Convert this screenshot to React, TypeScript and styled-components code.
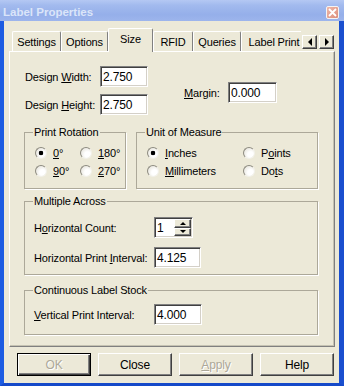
import React from 'react';
import styled, { createGlobalStyle } from 'styled-components';

const Global = createGlobalStyle`
  html, body { margin: 0; padding: 0; background: #ece9d8; }
  body { font-family: "Liberation Sans", Arial, sans-serif; font-size: 11px; color: #000; letter-spacing: -0.15px; }
  * { box-sizing: border-box; }
`;

const Window = styled.div`
  width: 344px;
  height: 386px;
  display: flex;
  flex-direction: column;
  background: #ece9d8;
  overflow: hidden;
`;

const TitleBar = styled.div`
  height: 21px;
  flex: none;
  display: flex;
  align-items: center;
  justify-content: space-between;
  padding: 3px 5px 0 3px;
  background: linear-gradient(to bottom, #b4c8f3 0%, #a2baee 25%, #95afea 70%, #9db5ec 100%);
`;

const Title = styled.span`
  font-family: "Liberation Sans", Arial, sans-serif;
  font-weight: bold;
  font-size: 11.5px;
  letter-spacing: 0;
  color: #dbe5f9;
`;

const CloseBtn = styled.div`
  width: 13px;
  height: 13px;
  border: 1px solid #f4f4f4;
  border-radius: 2px;
  background: linear-gradient(135deg, #eeb7a8 0%, #dc8f7c 100%);
  display: flex;
  align-items: center;
  justify-content: center;
`;

const Frame = styled.div`
  flex: 1;
  display: flex;
  flex-direction: column;
  border-left: 4px solid #1d5ce2;
  border-right: 5px solid #1a4fcf;
  border-bottom: 3px solid #1549c9;
  padding: 7px 4px 7px 5px;
`;

const TabRow = styled.div`
  height: 23px;
  display: flex;
  align-items: flex-end;
  position: relative;
  z-index: 1;
`;

const TabList = styled.div`
  width: 292px;
  height: 24px;
  padding-left: 3px;
  display: flex;
  align-items: flex-start;
  overflow: hidden;
  align-self: flex-start;
`;

const Tab = styled.div<{ $w: number; $active?: boolean }>`
  flex: none;
  width: ${(p) => p.$w}px;
  height: ${(p) => (p.$active ? 24 : 20)}px;
  margin-top: ${(p) => (p.$active ? 0 : 3)}px;
  background: #ece9d8;
  border-top: 1px solid #fff;
  border-left: 1px solid #fff;
  border-right: 1px solid #808080;
  border-radius: 2px 2px 0 0;
  display: flex;
  align-items: center;
  justify-content: center;
  padding-bottom: ${(p) => (p.$active ? 3 : 0)}px;
  white-space: nowrap;
`;

const TabArrows = styled.div`
  display: flex;
  gap: 2px;
  margin-left: 1px;
  margin-bottom: 2px;
  align-self: flex-end;
`;

const ArrowBtn = styled.div`
  width: 15px;
  height: 14px;
  background: #ece9d8;
  border: 1px solid;
  border-color: #fff #404040 #404040 #fff;
  box-shadow: inset -1px -1px 0 #808080;
  display: flex;
  align-items: center;
  justify-content: center;
`;

const Panel = styled.div`
  height: 296px;
  flex: none;
  border: 1px solid;
  border-color: #fff #808080 #808080 #fff;
  box-shadow: inset -1px -1px 0 #c5c2b2;
  padding: 14px 0 0 14px;
  display: flex;
  flex-direction: column;
`;

const TopBlock = styled.div`
  display: flex;
  align-items: flex-start;
`;

const Column = styled.div`
  display: flex;
  flex-direction: column;
  gap: 7px;
`;

const FieldRow = styled.div<{ $mt?: number; $ml?: number }>`
  display: flex;
  align-items: center;
  height: 21px;
  margin-top: ${(p) => p.$mt ?? 0}px;
  margin-left: ${(p) => p.$ml ?? 0}px;
`;

const Label = styled.span<{ $w: number }>`
  width: ${(p) => p.$w}px;
  flex: none;
  padding-left: ${(p) => (p.$w > 50 ? 1 : 0)}px;
  white-space: nowrap;
`;

const TextBox = styled.div<{ $w: number }>`
  width: ${(p) => p.$w}px;
  height: 21px;
  flex: none;
  background: #fff;
  border: 1px solid;
  border-color: #808080 #fff #fff #808080;
  box-shadow: inset 1px 1px 0 #404040, inset -1px -1px 0 #d4d0c8;
  padding-left: 2px;
  display: flex;
  align-items: center;
  font-size: 12px;
`;

const GroupsRow = styled.div<{ $mt: number }>`
  display: flex;
  gap: 10px;
  margin-top: ${(p) => p.$mt}px;
`;

const Group = styled.fieldset<{ $w: number; $h: number; $pt: number }>`
  margin: 0;
  min-width: 0;
  width: ${(p) => p.$w}px;
  height: ${(p) => p.$h}px;
  padding: ${(p) => p.$pt}px 0 0 8px;
  border: 1px solid #aca899;
  box-shadow: 1px 1px 0 #fff;
  display: flex;
  flex-direction: column;
  gap: 9px;
`;

const Legend = styled.legend`
  padding: 0 1px;
  line-height: 13px;
  font-size: 11px;
`;

const RadioGrid = styled.div<{ $col: number }>`
  display: grid;
  grid-template-columns: ${(p) => p.$col}px ${(p) => p.$col}px;
  grid-auto-rows: 17px;
  row-gap: 1px;
  padding-left: 2px;
`;

const RadioItem = styled.label`
  display: flex;
  align-items: center;
  gap: 6px;
  white-space: nowrap;
`;

const RadioDot = styled.span<{ $on?: boolean }>`
  width: 12px;
  height: 12px;
  flex: none;
  border-radius: 50%;
  border: 1px solid;
  border-color: #8d8b80 #f2f1ea #f2f1ea #8d8b80;
  background: ${(p) =>
    p.$on
      ? 'radial-gradient(circle, #000 0 2px, transparent 2.6px), radial-gradient(circle at 65% 65%, #ffffff 30%, #dedbd0 100%)'
      : 'radial-gradient(circle at 65% 65%, #ffffff 30%, #dedbd0 100%)'};
`;

const SpinBox = styled.div`
  width: 39px;
  height: 21px;
  flex: none;
  background: #fff;
  border: 1px solid;
  border-color: #808080 #fff #fff #808080;
  box-shadow: inset 1px 1px 0 #404040, inset -1px -1px 0 #d4d0c8;
  display: flex;
  padding: 1px 1px 1px 0;
  font-size: 12px;
`;

const SpinText = styled.span`
  flex: 1;
  padding-left: 2px;
  display: flex;
  align-items: center;
`;

const SpinButtons = styled.div`
  width: 17px;
  display: flex;
  flex-direction: column;
`;

const SpinBtn = styled.div`
  flex: 1;
  background: #ece9d8;
  border: 1px solid;
  border-color: #fff #404040 #404040 #fff;
  box-shadow: inset -1px -1px 0 #808080;
  display: flex;
  align-items: center;
  justify-content: center;
`;

const ButtonRow = styled.div`
  display: flex;
  gap: 7px;
  padding-left: 8px;
  margin-top: 6px;
`;

const Button = styled.div<{ $default?: boolean; $disabled?: boolean }>`
  width: 74px;
  height: 23px;
  background: #ece9d8;
  border: 1px solid;
  border-color: ${(p) => (p.$default ? '#000' : '#fff #404040 #404040 #fff')};
  box-shadow: ${(p) =>
    p.$default
      ? 'inset 1px 1px 0 #fff, inset -1px -1px 0 #404040, inset -2px -2px 0 #808080'
      : 'inset -1px -1px 0 #808080'};
  display: flex;
  align-items: center;
  justify-content: center;
  font-size: 12px;
  color: ${(p) => (p.$disabled ? '#aca899' : '#000')};
  text-shadow: ${(p) => (p.$disabled ? '1px 1px 0 #fff' : 'none')};
`;

const U = styled.span`
  text-decoration: underline;
`;

const Tri = ({ dir }: { dir: 'left' | 'right' | 'up' | 'down' }) => {
  const pts = {
    left: '4,0 4,8 0,4',
    right: '0,0 0,8 4,4',
    up: '0,3 6,3 3,0',
    down: '0,0 6,0 3,3',
  }[dir];
  const horiz = dir === 'left' || dir === 'right';
  return (
    <svg width={horiz ? 4 : 6} height={horiz ? 8 : 3} viewBox={horiz ? '0 0 4 8' : '0 0 6 3'}>
      <polygon points={pts} fill="#000" />
    </svg>
  );
};

export default function App() {
  return (
    <>
      <Global />
      <Window>
        <TitleBar>
          <Title>Label Properties</Title>
          <CloseBtn>
            <svg width="9" height="9" viewBox="0 0 9 9">
              <path d="M1 1 L8 8 M8 1 L1 8" stroke="#fff" strokeWidth="1.8" />
            </svg>
          </CloseBtn>
        </TitleBar>
        <Frame>
          <TabRow>
            <TabList>
              <Tab $w={49}>Settings</Tab>
              <Tab $w={47}>Options</Tab>
              <Tab $w={45} $active>Size</Tab>
              <Tab $w={40}>RFID</Tab>
              <Tab $w={48}>Queries</Tab>
              <Tab $w={66}>Label Print</Tab>
            </TabList>
            <TabArrows>
              <ArrowBtn><Tri dir="left" /></ArrowBtn>
              <ArrowBtn><Tri dir="right" /></ArrowBtn>
            </TabArrows>
          </TabRow>
          <Panel>
            <TopBlock>
              <Column>
                <FieldRow>
                  <Label $w={76}>Design <U>W</U>idth:</Label>
                  <TextBox $w={48}>2.750</TextBox>
                </FieldRow>
                <FieldRow>
                  <Label $w={76}>Design <U>H</U>eight:</Label>
                  <TextBox $w={48}>2.750</TextBox>
                </FieldRow>
              </Column>
              <FieldRow $mt={16} $ml={36}>
                <Label $w={44}><U>M</U>argin:</Label>
                <TextBox $w={49}>0.000</TextBox>
              </FieldRow>
            </TopBlock>

            <GroupsRow $mt={11}>
              <Group $w={102} $h={63} $pt={5}>
                <Legend>Print Rotation</Legend>
                <RadioGrid $col={45}>
                  <RadioItem><RadioDot $on /><span><U>0</U>°</span></RadioItem>
                  <RadioItem><RadioDot /><span><U>1</U>80°</span></RadioItem>
                  <RadioItem><RadioDot /><span><U>9</U>0°</span></RadioItem>
                  <RadioItem><RadioDot /><span><U>2</U>70°</span></RadioItem>
                </RadioGrid>
              </Group>
              <Group $w={182} $h={63} $pt={5}>
                <Legend>Unit of Measure</Legend>
                <RadioGrid $col={96}>
                  <RadioItem><RadioDot $on /><span><U>I</U>nches</span></RadioItem>
                  <RadioItem><RadioDot /><span>P<U>o</U>ints</span></RadioItem>
                  <RadioItem><RadioDot /><span><U>M</U>illimeters</span></RadioItem>
                  <RadioItem><RadioDot /><span>Do<U>t</U>s</span></RadioItem>
                </RadioGrid>
              </Group>
            </GroupsRow>

            <GroupsRow $mt={6}>
              <Group $w={294} $h={80} $pt={9}>
                <Legend>Multiple Across</Legend>
                <FieldRow>
                  <Label $w={121}>H<U>o</U>rizontal Count:</Label>
                  <SpinBox>
                    <SpinText>1</SpinText>
                    <SpinButtons>
                      <SpinBtn><Tri dir="up" /></SpinBtn>
                      <SpinBtn><Tri dir="down" /></SpinBtn>
                    </SpinButtons>
                  </SpinBox>
                </FieldRow>
                <FieldRow>
                  <Label $w={121}>Horizontal Print <U>I</U>nterval:</Label>
                  <TextBox $w={47}>4.125</TextBox>
                </FieldRow>
              </Group>
            </GroupsRow>

            <GroupsRow $mt={9}>
              <Group $w={294} $h={51} $pt={7}>
                <Legend>Continuous Label Stock</Legend>
                <FieldRow>
                  <Label $w={121}><U>V</U>ertical Print Interval:</Label>
                  <TextBox $w={48}>4.000</TextBox>
                </FieldRow>
              </Group>
            </GroupsRow>
          </Panel>
          <ButtonRow>
            <Button $default $disabled>OK</Button>
            <Button>Close</Button>
            <Button $disabled><U>A</U>pply</Button>
            <Button>Help</Button>
          </ButtonRow>
        </Frame>
      </Window>
    </>
  );
}
